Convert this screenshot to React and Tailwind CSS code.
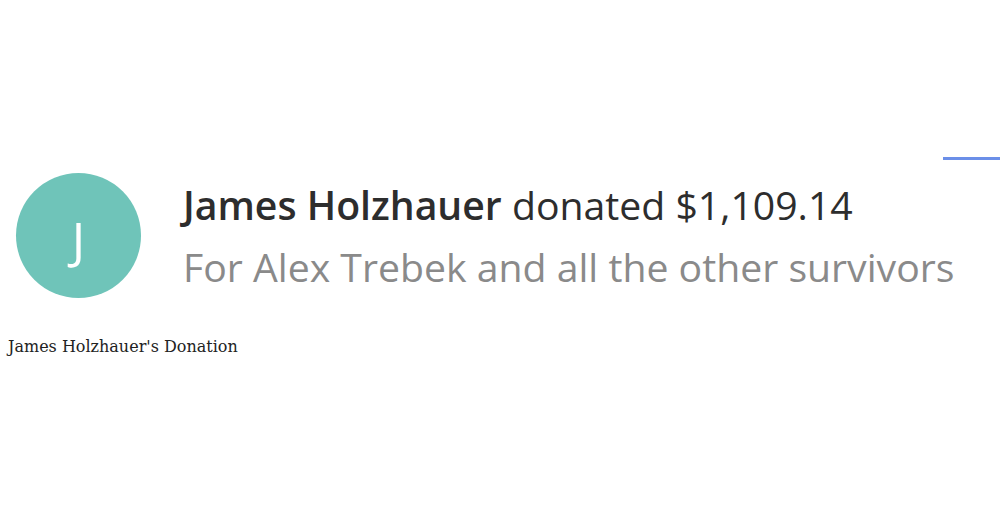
export default function App() {
  return (
    <div className="w-[1000px] h-[523px] bg-white relative overflow-hidden">
      <div className="absolute left-[943px] top-[157px] w-[57px] h-[3px] bg-[#6b8fe8]" />
      <div className="pt-[173px] pl-[16px] flex flex-row items-start gap-[42px]">
        <div className="w-[125px] h-[125px] rounded-full bg-[#6fc4b9] flex items-center justify-center shrink-0">
          <span className="text-white text-[50px] font-normal font-['Open_Sans',sans-serif] leading-none mt-[6px]">J</span>
        </div>
        <div className="flex flex-col font-['Open_Sans',sans-serif] pt-[4px]">
          <div className="text-[39.2px] leading-[56px] text-[#2d2d2d] whitespace-nowrap">
            <span className="font-semibold">James Holzhauer</span> donated $1,109.14
          </div>
          <div className="text-[39.2px] leading-[56px] text-[#8a8a8a] whitespace-nowrap mt-[6px]">
            For Alex Trebek and all the other survivors
          </div>
        </div>
      </div>
      <div className="pl-[8px] mt-[41px] font-['DejaVu_Serif',serif] text-[16px] leading-none text-[#222] whitespace-nowrap">
        James Holzhauer's Donation
      </div>
    </div>
  );
}
